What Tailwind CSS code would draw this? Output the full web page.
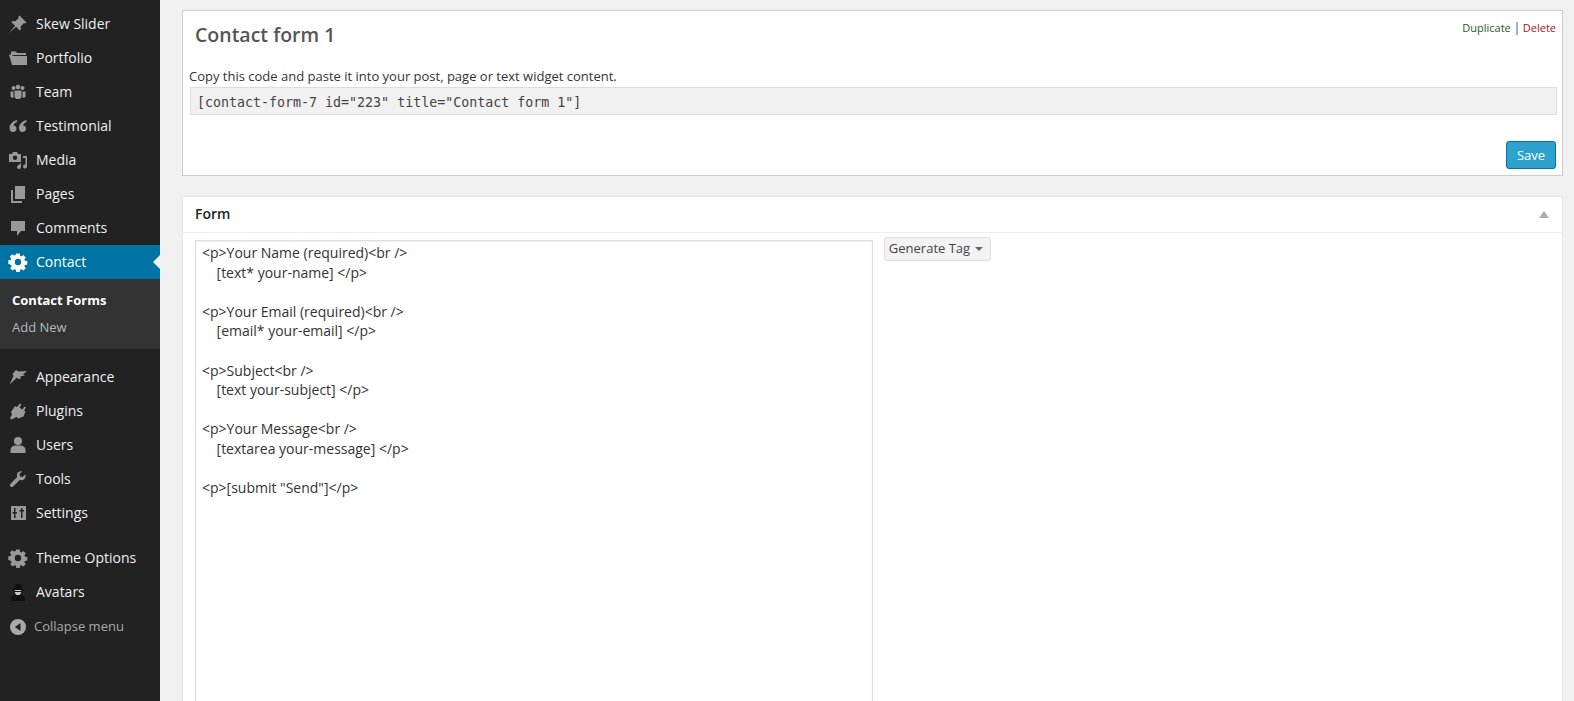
<!DOCTYPE html>
<html lang="en">
  <head>
    <meta charset="UTF-8" />
    <meta name="viewport" content="width=device-width, initial-scale=1.0" />
    <script src="https://cdn.jsdelivr.net/npm/@tailwindcss/browser@4"></script>
    <title>Edit Contact Form</title>
  </head>
  <body class="h-[701px] overflow-hidden flex bg-[#f1f1f1] font-['Open_Sans',sans-serif] text-[14px] text-[#444]">
    <!-- admin menu -->
    <nav class="w-[160px] h-full shrink-0 bg-[#222] pt-[7px] text-[#eee]">
      <a class="h-[34px] flex items-center">
        <svg class="w-[20px] h-[20px] ml-[8px] mr-[8px] fill-[#999]" viewBox="0 0 20 20"><path d="M11.5 1.5l7 7-1.2 1-1.3-.4-3.4 3.4.3 2.7-1.2 1.2-3.6-3.6-7 6.200 6-7.200L3.4 8.2l1.2-1.2 2.700.3 3.400-3.400-.4-1.300z"/></svg>
        <span class="pb-[2px]">Skew Slider</span>
      </a>
      <a class="h-[34px] flex items-center">
        <svg class="w-[20px] h-[20px] ml-[8px] mr-[8px] fill-[#999]" viewBox="0 0 20 20"><path d="M3 6V3.500h5L9 5h9v2H4.500L4 8.500z"/><path d="M1 6.500h2.500L5 8h14v9H4z"/></svg>
        <span class="pb-[2px]">Portfolio</span>
      </a>
      <a class="h-[34px] flex items-center">
        <svg class="w-[20px] h-[20px] ml-[8px] mr-[8px] fill-[#999]" viewBox="0 0 20 20"><circle cx="5.500" cy="6" r="2"/><circle cx="14.500" cy="6" r="2"/><circle cx="10" cy="5" r="2.300"/><path d="M2.500 9.500h3v6l-1.500.5-1.500-1.500zM14.500 9.500h3v5L16 16l-1.500-.5zM6.500 8.500h7v6.500L12 17H8l-1.500-2z"/></svg>
        <span class="pb-[2px]">Team</span>
      </a>
      <a class="h-[34px] flex items-center">
        <svg class="w-[20px] h-[20px] ml-[8px] mr-[8px] fill-[#999]" viewBox="0 0 20 20"><path d="M9 4C5 5 1.500 8 1.500 12c0 2.500 1.500 4 3.500 4s3.500-1.500 3.500-3.500-1.500-3-3-3c.5-2 2-3 3.500-3.500zM18.500 4c-4 1-7.500 4-7.500 8 0 2.500 1.500 4 3.500 4s3.500-1.500 3.500-3.500-1.500-3-3-3c.5-2 2-3 3.500-3.500z"/></svg>
        <span class="pb-[2px]">Testimonial</span>
      </a>
      <a class="h-[34px] flex items-center">
        <svg class="w-[20px] h-[20px] ml-[8px] mr-[8px] fill-[#999]" viewBox="0 0 20 20"><path fill-rule="evenodd" d="M5 2h4l1 2h3v8H1V4h3zM7 5.500a2.200 2.200 0 100 4.400 2.200 2.200 0 000-4.400zM15 6h4v10.500a2 2 0 11-1.500-2V8H15zM11.500 13.500h1.500v3.500a2 2 0 11-1.500-2z"/></svg>
        <span class="pb-[2px]">Media</span>
      </a>
      <a class="h-[34px] flex items-center">
        <svg class="w-[20px] h-[20px] ml-[8px] mr-[8px] fill-[#999]" viewBox="0 0 20 20"><path d="M7 2h10v13H7zM3 6h2v11h9v2H3z"/></svg>
        <span class="pb-[2px]">Pages</span>
      </a>
      <a class="h-[34px] flex items-center">
        <svg class="w-[20px] h-[20px] ml-[8px] mr-[8px] fill-[#999]" viewBox="0 0 20 20"><path d="M3 3h14v10h-4l-4 5v-5H3z"/></svg>
        <span class="pb-[2px]">Comments</span>
      </a>
      <a class="relative h-[34px] flex items-center bg-[#0074a2] text-white">
        <svg class="w-[20px] h-[20px] ml-[8px] mr-[8px] fill-white" viewBox="0 0 20 20"><path fill-rule="evenodd" d="M8.300 1.500h3.400l.4 2.300 1.400.6 1.900-1.400 2.400 2.400-1.400 1.900.6 1.400 2.300.4v3.400l-2.300.4-.6 1.400 1.400 1.900-2.400 2.400-1.900-1.400-1.400.6-.4 2.300H8.300l-.4-2.300-1.400-.6-1.900 1.400-2.400-2.400 1.400-1.900-.6-1.400L.3 11.700V8.300l2.300-.4.6-1.400-1.400-1.900 2.400-2.400 1.900 1.400 1.400-.6zM10 6.800a3.200 3.200 0 100 6.400 3.200 3.200 0 000-6.400z"/></svg>
        <span class="pb-[2px]">Contact</span>
        <span class="absolute right-0 top-[10px] border-y-[7px] border-y-transparent border-r-[7px] border-r-[#f1f1f1]"></span>
      </a>
      <div class="h-[70px] bg-[#333] pt-[11px] pl-[12px] text-[13px] leading-[18px]">
        <a class="block h-[28px] pt-[1px] font-bold text-white">Contact Forms</a>
        <a class="block text-[#b4b9be]">Add New</a>
      </div>
      <div class="h-[11px]"></div>
      <a class="h-[34px] flex items-center">
        <svg class="w-[20px] h-[20px] ml-[8px] mr-[8px] fill-[#999]" viewBox="0 0 20 20"><path d="M1.500 17.500L5.500 9 4.500 7 8 3l2.500 1.500L19 4l-4 3.500 2 1-5 1 1 2-3 .5-1-1.500z"/></svg>
        <span class="pb-[2px]">Appearance</span>
      </a>
      <a class="h-[34px] flex items-center">
        <svg class="w-[20px] h-[20px] ml-[8px] mr-[8px] fill-[#999]" viewBox="0 0 20 20"><path d="M12 2.500l1.500 1-2 3 3 2 2-3 1.500 1-2 3 1.500 1-2 5-5 2-2-1.500L3.500 18.500 2 17l2-3.500L3 11l4-6 2 .9z"/></svg>
        <span class="pb-[2px]">Plugins</span>
      </a>
      <a class="h-[34px] flex items-center">
        <svg class="w-[20px] h-[20px] ml-[8px] mr-[8px] fill-[#999]" viewBox="0 0 20 20"><circle cx="10" cy="6" r="4"/><path d="M2.500 18v-3c0-2.500 2.500-4.500 5-4.500h5c2.500 0 5 2 5 4.500v3z"/></svg>
        <span class="pb-[2px]">Users</span>
      </a>
      <a class="h-[34px] flex items-center">
        <svg class="w-[20px] h-[20px] ml-[8px] mr-[8px] fill-[#999]" viewBox="0 0 20 20"><path d="M17.500 5.500L14.500 8l-2.500-.5-.5-2.500L14 2.500c-2-.5-4.500.5-5 2.500-.3 1-.2 2 .2 3L2.500 14.800c-.8.8-.8 2 0 2.700s1.900.8 2.700 0L12 10.800c1 .4 2 .5 3 .2 2-.7 3-3.500 2.500-5.500z"/></svg>
        <span class="pb-[2px]">Tools</span>
      </a>
      <a class="h-[34px] flex items-center">
        <svg class="w-[20px] h-[20px] ml-[8px] mr-[8px] fill-[#999]" viewBox="0 0 20 20"><path fill-rule="evenodd" d="M3 3h15v14H3zM6 5v4H4.500v1.500H6V15h1.500v-4.500H9V9H7.500V5zM13 5v2h-1.500v1.500H13V15h1.500V8.500H16V7h-1.500V5z"/></svg>
        <span class="pb-[2px]">Settings</span>
      </a>
      <div class="h-[11px]"></div>
      <a class="h-[34px] flex items-center">
        <svg class="w-[20px] h-[20px] ml-[8px] mr-[8px] fill-[#999]" viewBox="0 0 20 20"><path fill-rule="evenodd" d="M8.300 1.500h3.400l.4 2.300 1.400.6 1.900-1.400 2.400 2.400-1.400 1.900.6 1.400 2.300.4v3.400l-2.300.4-.6 1.400 1.400 1.900-2.400 2.400-1.900-1.400-1.400.6-.4 2.300H8.300l-.4-2.300-1.400-.6-1.900 1.400-2.400-2.400 1.400-1.900-.6-1.400L.3 11.700V8.300l2.300-.4.6-1.400-1.400-1.900 2.400-2.400 1.900 1.400 1.400-.6zM10 6.800a3.200 3.200 0 100 6.400 3.200 3.200 0 000-6.400z"/></svg>
        <span class="pb-[2px]">Theme Options</span>
      </a>
      <a class="h-[34px] flex items-center">
        <svg class="w-[20px] h-[20px] ml-[8px] mr-[8px]" viewBox="0 0 20 20"><path fill="#111" d="M7 2h6l1 5h2v1H4V7h2z"/><path fill="#c8c8c8" d="M7 8h6v3l-1.500 2h-3L7 11z"/><path fill="#111" d="M7 9h6v1H7zM3 19v-3c0-2 2-3 5-3l2 1 2-1c3 0 5 1 5 3v3z"/></svg>
        <span class="pb-[2px]">Avatars</span>
      </a>
      <a class="h-[34px] flex items-center pt-[2px] text-[13px] text-[#aaa]">
        <svg class="w-[18px] h-[18px] ml-[9px] mr-[7px] fill-[#aaa]" viewBox="0 0 18 18"><path fill-rule="evenodd" d="M9 1a8 8 0 100 16A8 8 0 009 1zM11.500 5v8L6 9z"/></svg>
        <span>Collapse menu</span>
      </a>
    </nav>

    <main class="flex-1 min-w-0 h-full overflow-hidden pt-[10px] pl-[22px] pr-[11px]">
      <!-- title box -->
      <section class="relative h-[166px] bg-white border border-[#ccc] pl-[6px] pr-[5px]">
        <div class="absolute right-[6px] top-[9px] flex items-center text-[11px] leading-[16px]">
          <a class="text-[#1e5c1e]">Duplicate</a>
          <span class="mx-[5px] w-[2px] h-[13px] bg-[#9db4cc]"></span>
          <a class="text-[#b3101a]">Delete</a>
        </div>
        <h2 class="pl-[6px] pt-[10px] text-[19.5px] leading-[27px] font-semibold text-[#555]">Contact form 1</h2>
        <p class="mt-[19px] text-[13px] leading-[18px] text-[#333]">Copy this code and paste it into your post, page or text widget content.</p>
        <div class="mt-[2px] ml-[1px] h-[28px] bg-[#f1f1f1] border border-[#ddd] pl-[6px] font-['DejaVu_Sans_Mono',monospace] text-[13.3px] leading-[30px] text-[#444] whitespace-pre">[contact-form-7 id="223" title="Contact form 1"]</div>
        <div class="mt-[26px] mr-[1px] flex justify-end">
          <button class="w-[50px] h-[28px] pt-[1px] rounded-[3px] bg-[#2ea2cc] border border-[#0074a2] text-[13px] text-white">Save</button>
        </div>
      </section>

      <!-- form box -->
      <section class="mt-[20px] h-[520px] overflow-hidden bg-white border border-[#e5e5e5]">
        <div class="relative h-[36px] border-b border-[#eee] pl-[12px] text-[14px] leading-[33px] font-semibold text-[#222]">
          Form
          <span class="absolute right-[13px] top-[14px] border-x-[5px] border-x-transparent border-b-[7px] border-b-[#aaa]"></span>
        </div>
        <div class="flex items-start pl-[12px] pt-[4px]">
          <textarea class="w-[678px] h-[600px] mt-[3px] resize-none outline-none border border-[#ddd] shadow-[inset_0_1px_2px_rgba(0,0,0,0.07)] px-[6px] pt-[2px] text-[14px] leading-[19.6px] text-[#333] bg-white"><p>Your Name (required)<br />
    [text* your-name] </p>

<p>Your Email (required)<br />
    [email* your-email] </p>

<p>Subject<br />
    [text your-subject] </p>

<p>Your Message<br />
    [textarea your-message] </p>

<p>[submit "Send"]</p></textarea>
          <button class="ml-[11px] w-[107px] h-[24px] flex items-center justify-center gap-[5px] pr-[3px] rounded-[3px] bg-[#f3f3f3] border border-[#ddd] text-[13px] text-[#444]">
            Generate Tag
            <span class="border-x-[4px] border-x-transparent border-t-[4px] border-t-[#666]"></span>
          </button>
        </div>
      </section>
    </main>
  </body>
</html>
